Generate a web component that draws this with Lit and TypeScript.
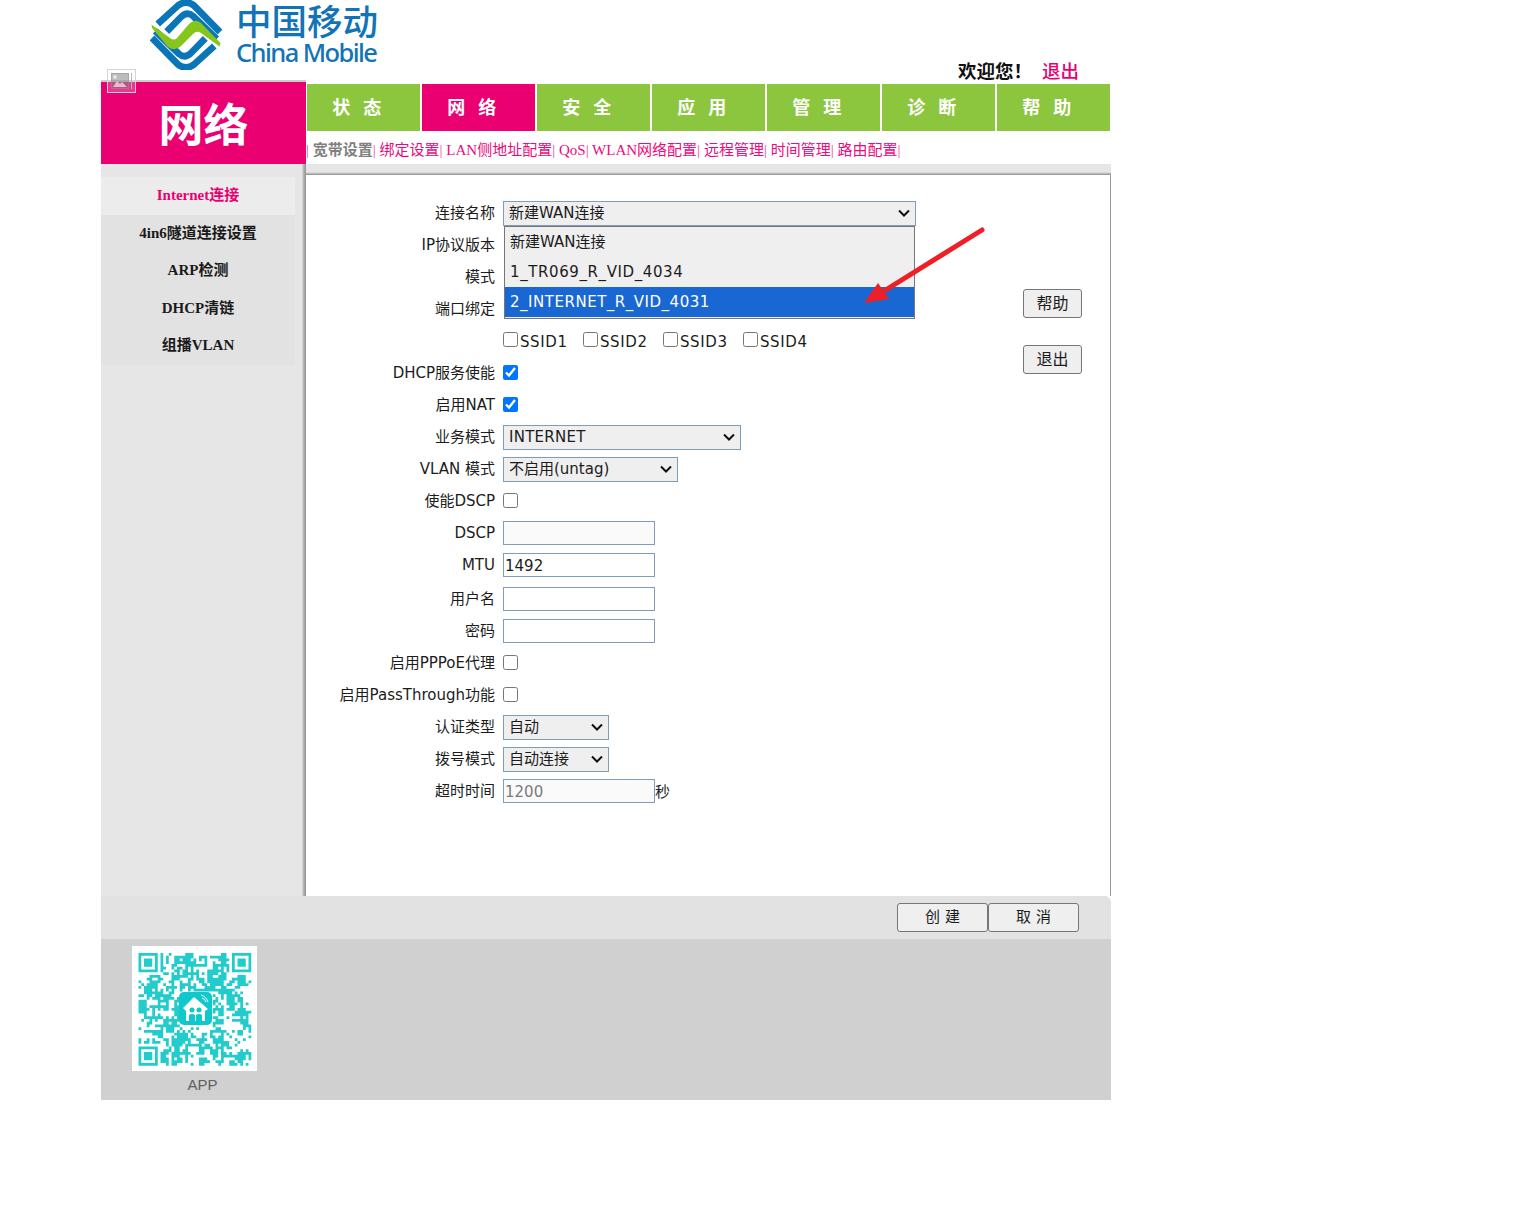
import { LitElement, html, css, svg } from "lit";
import { customElement } from "lit/decorators.js";

const TABS = ["状 态", "网 络", "安 全", "应 用", "管 理", "诊 断", "帮 助"];
const SIDE = ["Internet连接", "4in6隧道连接设置", "ARP检测", "DHCP清链", "组播VLAN"];

function qrPath(): string {
  const n = 41;
  let s = 77123;
  const rnd = () => {
    s = (s + 0x6d2b79f5) | 0;
    let t = Math.imul(s ^ (s >>> 15), 1 | s);
    t = (t + Math.imul(t ^ (t >>> 7), 61 | t)) ^ t;
    return ((t ^ (t >>> 14)) >>> 0) / 4294967296;
  };
  const inFinder = (x: number, y: number) =>
    (x < 8 && y < 8) || (x >= n - 8 && y < 8) || (x < 8 && y >= n - 8);
  let d = "";
  const grid: boolean[][] = [];
  for (let y = 0; y < n; y++) {
    grid.push([]);
    for (let x = 0; x < n; x++) {
      const up = y > 0 && grid[y - 1][x];
      const left = x > 0 && grid[y][x - 1];
      const p = 0.36 + (up ? 0.16 : 0) + (left ? 0.16 : 0);
      grid[y].push(rnd() < p);
    }
  }
  for (let y = 0; y < n; y++) {
    for (let x = 0; x < n; x++) {
      if (inFinder(x, y)) continue;
      if (x >= 15 && x <= 26 && y >= 14 && y <= 26) continue;
      if (grid[y][x]) d += `M${x} ${y}h1v1h-1z`;
    }
  }
  const finder = (x: number, y: number) =>
    `M${x} ${y}h7v7h-7zM${x + 1} ${y + 1}v5h5v-5zM${x + 2} ${y + 2}h3v3h-3z`;
  d += finder(0, 0) + finder(n - 7, 0) + finder(0, n - 7);
  return d;
}

const band = svg`
  <path d="M7.7 24 L28 5.5 Q36 -0.5 44 5.5 L70 32" />
  <path d="M16.7 31.7 L31 17 Q37 11 43 16 L66.7 39" />`;

@customElement("app-root")
export class AppRoot extends LitElement {
  static styles = css`
    :host {
      display: block;
      font: 15px "DejaVu Sans", "Noto Sans CJK SC", sans-serif;
      color: #222;
    }
    * { box-sizing: border-box; }
    .page { width: 1010px; margin-left: 101px; position: relative; }
    .head { height: 80px; display: flex; }
    .logo { display: flex; margin-left: 49px; gap: 14px; height: 72px; }
    .mark { width: 72px; height: 70px; }
    .mark path { fill: none; stroke: #0a76b8; stroke-width: 6.8; }
    .mark path.green { fill: #85c51c; stroke: none; }
    .logotext { color: #1273b6; display: flex; flex-direction: column; }
    .cn { font: 500 35.5px/36px "Noto Sans CJK SC", sans-serif; margin-top: 2px; white-space: nowrap; }
    .en { font: 500 25.5px/28px "Noto Sans", sans-serif; letter-spacing: -1.6px; white-space: nowrap; }
    .welcome {
      margin-left: auto; margin-right: 32px; margin-bottom: -2px; align-self: flex-end; height: 24px;
      font: 700 18.5px/24px "Noto Sans CJK SC", sans-serif; color: #111; white-space: nowrap;
    }
    .welcome a { color: #eb0072; font-weight: 500; margin-left: 10px; }
    .broken { position: absolute; left: 6px; top: 69px; width: 29px; height: 24px; }
    .main { display: grid; grid-template-columns: 205px 805px; }
    .left { border-top: 2px solid #cdcdcd; }
    .title {
      height: 82px; background: #eb0072; color: #fff; display: flex; align-items: center; justify-content: center;
      font: 700 45px/1 "Noto Sans CJK SC", sans-serif; padding-bottom: 2px;
    }
    .side {
      height: 732px; padding-top: 13px;
      background: linear-gradient(to right, #e6e6e6 0, #e6e6e6 201px, #bdbdbd 202px, #8f8f8f 205px);
    }
    .menu { width: 194px; background: #e2e2e2; }
    .menu div {
      height: 37.5px; display: flex; align-items: center; justify-content: center; padding-bottom: 4px;
      font: 700 15px "Liberation Serif", "Noto Sans CJK SC", serif; color: #1a1a1a; white-space: nowrap;
    }
    .menu div.on { background: #ececec; color: #eb0072; }
    .right { padding-top: 4px; }
    .tabs { display: flex; gap: 2px; padding-left: 1px; }
    .tab {
      width: 113px; height: 47px; background: #8bc63e; color: #fff; display: flex; align-items: center; justify-content: center;
      font: 700 18px "Noto Sans CJK SC", sans-serif; letter-spacing: 4.5px; padding: 0 9px 4px 0;
    }
    .tab.on { background: #eb0072; }
    .sub {
      height: 33px; color: #f0439a; white-space: nowrap;
      font: 15px/38px "Liberation Serif", "Noto Sans CJK SC", serif;
    }
    .sub b { color: #808080; font-weight: 700; }
    .sub span { color: #ec0a7c; }
    .strip {
      height: 11px; background: linear-gradient(to bottom, #e6e6e6 0, #e6e6e6 8px, #c8c8c8 9px, #8f8f8f 11px);
    }
    .content {
      height: 721px; background: #fff; border-right: 1px solid #999; position: relative; display: flex;
    }
    .form { width: 717px; padding-top: 21px; flex: none; }
    .row { display: flex; height: 32px; align-items: center; }
    .row.push { margin-top: 1px; }
    .row.ssid { padding-top: 2px; margin-top: 1px; margin-bottom: -1px; }
    .lbl { width: 189px; text-align: right; white-space: nowrap; flex: none; color: #1c1c1c; margin-bottom: 2px; }
    .row.latin .lbl { margin-bottom: 0; }
    .ctl { margin-left: 8px; display: flex; align-items: center; position: relative; white-space: nowrap; }
    select {
      appearance: none;
      font: 15px "DejaVu Sans", "Noto Sans CJK SC", sans-serif; height: 25px; margin: 2px 0 0;
      border: 1px solid #7f9db9; color: #1c1c1c; border-radius: 0; padding: 0 1px 0 5px;
      background: #efefef url("data:image/svg+xml,%3Csvg xmlns='http://www.w3.org/2000/svg' width='12' height='8'%3E%3Cpath d='M1 1.5l5 5 5-5' fill='none' stroke='%23111' stroke-width='2'/%3E%3C/svg%3E") no-repeat right 5px center;
    }
    .ls { letter-spacing: 0.25px; }
    .w413 { width: 413px; }
    .w238 { width: 238px; }
    .w175 { width: 175px; }
    .w106 { width: 106px; }
    input[type="text"] {
      width: 152px; height: 24px; border: 1px solid #7f9db9; border-radius: 0; padding: 2px 1px 0; margin: 0;
      font: 15px "DejaVu Sans", "Noto Sans CJK SC", sans-serif; color: #1c1c1c; background: #fff; outline: none;
    }
    input.dn { margin-top: 2px; }
    input.off { background: #fafafa; }
    input.grey { color: #7a7a7a; background: #fafafa; }
    input[type="checkbox"] { width: 15px; height: 15px; margin: 0; flex: none; }
    .ssids { display: flex; }
    .ssids label { display: flex; align-items: center; color: #1c1c1c; width: 80px; letter-spacing: 0.6px; }
    .ssids input { margin-top: -6px; }
    .ssids span { margin-left: 2px; }
    .dd {
      position: absolute; left: 1px; top: 27.5px; width: 411px; height: 93px; z-index: 2;
      border: 1px solid #767676; background: #efefef; font-size: 15px; color: #1c1c1c;
    }
    .dd div { height: 30px; line-height: 30px; padding-left: 5px; }
    .dd .wide { letter-spacing: 0.6px; line-height: 31px; }
    .dd .sel { background: #1967d2; color: #fff; letter-spacing: 0.52px; line-height: 31px; }
    .btns-wrap { flex: 1; display: flex; justify-content: flex-end; padding-right: 28px; }
    .btns { display: flex; flex-direction: column; gap: 27px; padding-top: 114px; }
    button {
      font: 16px "DejaVu Sans", "Noto Sans CJK SC", sans-serif; background: #efefef; color: #1c1c1c;
      border: 1px solid #767676; border-radius: 3px; padding: 0 0 3px; margin: 0;
    }
    .btns button { width: 59px; height: 29px; }
    .arrow { position: absolute; left: 554px; top: 50px; width: 126px; height: 80px; z-index: 3; overflow: visible; }
    .foot {
      height: 43px; background: #e2e2e2; display: flex; justify-content: flex-end; align-items: center;
      padding-right: 32px; border-top-right-radius: 6px;
    }
    .foot button { width: 91px; height: 29px; font-size: 15px; padding-bottom: 5px; }
    .bottom { height: 161px; background: #d0d0d0; padding: 7px 0 0 31px; }
    .qr { width: 125px; height: 125px; background: #fff; display: block; }
    .app {
      width: 141px; text-align: center; font: 15px/18px "Liberation Sans", sans-serif; color: #5f5f5f; margin-top: 5px;
    }
  `;

  private row(label: string, ctl: unknown, cls = "") {
    return html`<div class="row ${cls}"><div class="lbl">${label}</div><div class="ctl">${ctl}</div></div>`;
  }

  private sel(w: string, opts: string[]) {
    return html`<select class=${w}>${opts.map((o) => html`<option>${o}</option>`)}</select>`;
  }

  render() {
    return html`
      <div class="page">
        <div class="head">
          <div class="logo">
            <svg class="mark" viewBox="0 0 72 70">
              ${band}
              <g transform="rotate(180 36 35)">${band}</g>
              <path
                class="green"
                d="M1.5 24.5 L20 38 Q24 41 27 38 L39 24 Q45 18 51 23 L70.5 43 L69.5 46.5 L51 33 Q47 30 43 34 L31 46 Q25 52 18 47 L2 28 Z"
              />
            </svg>
            <div class="logotext">
              <div class="cn">中国移动</div>
              <div class="en">China Mobile</div>
            </div>
          </div>
          <div class="welcome">欢迎您！<a>退出</a></div>
        </div>
        <svg class="broken" viewBox="0 0 29 24">
          <rect x="0.5" y="0.5" width="28" height="23" fill="#ffffff" fill-opacity=".2" stroke="#d4d4d4" />
          <rect x="4.5" y="4.5" width="17" height="15" fill="#7a7a7a" fill-opacity=".5" stroke="#8d8d8d" stroke-opacity=".7" />
          <path d="M6 18l4-6 3 3 2-2 5 5z" fill="#f2d5e2" fill-opacity=".8" />
          <rect x="6.5" y="6.5" width="3" height="3" fill="#efefef" />
          <path d="M24.5 4v16" stroke="#b5b5b5" />
        </svg>
        <div class="main">
          <div class="left">
            <div class="title">网络</div>
            <div class="side">
              <div class="menu">
                ${SIDE.map((s, i) => html`<div class=${i === 0 ? "on" : ""}>${s}</div>`)}
              </div>
            </div>
          </div>
          <div class="right">
            <div class="tabs">
              ${TABS.map((t, i) => html`<div class="tab ${i === 1 ? "on" : ""}">${t}</div>`)}
            </div>
            <div class="sub">| <b>宽带设置</b>| <span>绑定设置</span>| <span>LAN侧地址配置</span>| <span>QoS</span>| <span>WLAN网络配置</span>| <span>远程管理</span>| <span>时间管理</span>| <span>路由配置</span>|</div>
            <div class="strip"></div>
            <div class="content">
              <div class="form">
                ${this.row("连接名称", html`
                  ${this.sel("w413", ["新建WAN连接"])}
                  <div class="dd">
                    <div>新建WAN连接</div>
                    <div class="wide">1_TR069_R_VID_4034</div>
                    <div class="sel">2_INTERNET_R_VID_4031</div>
                  </div>`)}
                ${this.row("IP协议版本", "")}
                ${this.row("模式", "")}
                ${this.row("端口绑定", "")}
                ${this.row("", html`<div class="ssids">
                  ${["SSID1", "SSID2", "SSID3", "SSID4"].map(
                    (s) => html`<label><input type="checkbox" /><span>${s}</span></label>`
                  )}
                </div>`, "ssid")}
                ${this.row("DHCP服务使能", html`<input type="checkbox" checked />`)}
                ${this.row("启用NAT", html`<input type="checkbox" checked />`)}
                ${this.row("业务模式", this.sel("w238 ls", ["INTERNET"]))}
                ${this.row("VLAN 模式", this.sel("w175", ["不启用(untag)"]))}
                ${this.row("使能DSCP", html`<input type="checkbox" />`)}
                ${this.row("DSCP", html`<input type="text" class="off" />`, "push latin")}
                ${this.row("MTU", html`<input type="text" .value=${"1492"} />`, "latin")}
                ${this.row("用户名", html`<input type="text" class="dn" />`, "push")}
                ${this.row("密码", html`<input type="text" class="dn" />`)}
                ${this.row("启用PPPoE代理", html`<input type="checkbox" />`)}
                ${this.row("启用PassThrough功能", html`<input type="checkbox" />`)}
                ${this.row("认证类型", this.sel("w106", ["自动"]))}
                ${this.row("拨号模式", this.sel("w106", ["自动连接"]))}
                ${this.row("超时时间", html`<input type="text" class="grey dn" .value=${"1200"} />秒`)}
              </div>
              <div class="btns-wrap">
                <div class="btns">
                  <button>帮助</button>
                  <button>退出</button>
                </div>
              </div>
              <svg class="arrow" viewBox="0 0 126 80">
                <path d="M122 5 L16 71" stroke="#ee1f27" stroke-width="5" stroke-linecap="round" fill="none" />
                <path d="M4 78 L18 58 L29 74 Z" fill="#ee1f27" />
              </svg>
            </div>
          </div>
        </div>
        <div class="foot">
          <button>创 建</button><button>取 消</button>
        </div>
        <div class="bottom">
          <svg class="qr" viewBox="0 0 125 125">
            <g transform="translate(6.5 7) scale(2.75)">
              <path d=${qrPath()} fill="#22cccc" fill-rule="evenodd" />
            </g>
            <rect x="47" y="46" width="33" height="33" rx="5" fill="#0fc8cc" />
            <path d="M51 62 L62 51 L76 63 L73 65 L73 75 L54 75 L54 65 Z" fill="#fff" />
            <circle cx="60" cy="64" r="2.5" fill="#0fc8cc" />
            <circle cx="67" cy="64" r="2.5" fill="#0fc8cc" />
            <path d="M57 75v-6q3-2 6 0v6zM64 75v-6q3-2 6 0v6z" fill="#0fc8cc" />
            <path d="M69 49q5 1 7 7M70 52q3 .5 4 4" stroke="#fff" stroke-width="1" fill="none" />
          </svg>
          <div class="app">APP</div>
        </div>
      </div>
    `;
  }
}
